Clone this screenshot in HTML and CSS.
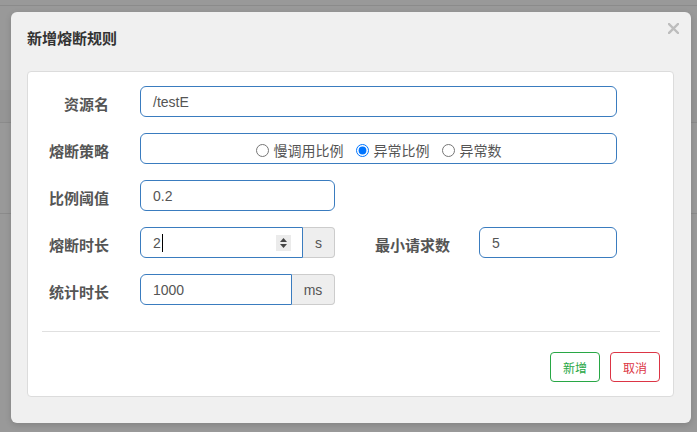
FILE: index.html
```html
<!DOCTYPE html>
<html lang="zh-CN">
<head>
<meta charset="utf-8">
<title>新增熔断规则</title>
<link rel="stylesheet" href="styles.css">
</head>
<body>
<div class="page">
  <div class="page-top"></div>
  <div class="page-band"></div>
  <div class="page-line"></div>
</div>
<div class="modal">
  <div class="modal-header">
    <h4 class="modal-title">新增熔断规则</h4>
    <button class="close" type="button" aria-label="关闭">
      <svg width="11" height="11" viewBox="0 0 11 11"><path d="M1 1L10 10M10 1L1 10" stroke="#bdbdbd" stroke-width="2.4" stroke-linecap="square" fill="none"/></svg>
    </button>
  </div>
  <div class="card">
    <div class="row">
      <div class="label">资源名</div>
      <div class="field w-full">/testE</div>
    </div>
    <div class="row">
      <div class="label">熔断策略</div>
      <div class="field w-full radios">
        <label class="radio"><input type="radio" name="grade">慢调用比例</label>
        <label class="radio"><input type="radio" name="grade" checked>异常比例</label>
        <label class="radio"><input type="radio" name="grade">异常数</label>
      </div>
    </div>
    <div class="row">
      <div class="label">比例阈值</div>
      <div class="field w-mid">0.2</div>
    </div>
    <div class="row">
      <div class="label">熔断时长</div>
      <div class="group">
        <div class="field group-input w-num">2<span class="caret"></span>
          <span class="spinner"><svg width="15" height="16" viewBox="0 0 15 16"><path d="M7.5 3L11 7H4Z" fill="#444"/><path d="M7.5 13L11 9H4Z" fill="#444"/></svg></span>
        </div>
        <div class="addon w-s">s</div>
      </div>
      <div class="label label-wide">最小请求数</div>
      <div class="field w-min">5</div>
    </div>
    <div class="row row-last">
      <div class="label">统计时长</div>
      <div class="group">
        <div class="field group-input w-stat">1000</div>
        <div class="addon w-ms">ms</div>
      </div>
    </div>
    <div class="divider"></div>
    <div class="footer">
      <button class="btn btn-ok" type="button">新增</button>
      <button class="btn btn-cancel" type="button">取消</button>
    </div>
  </div>
</div>
</body>
</html>
```
FILE: styles.css
```css
* { box-sizing: border-box; }
html, body { margin: 0; padding: 0; }
body {
  width: 697px;
  height: 432px;
  overflow: hidden;
  background: #999999;
  font-family: "Liberation Sans", "Noto Sans CJK SC", sans-serif;
  position: relative;
}
.page-top { height: 6px; border-bottom: 1px solid #8b8b8b; }
.page-band { margin-top: 84px; height: 33px; background: #959595; border-bottom: 1px solid #8b8b8b; }
.page-line { margin-top: 90px; height: 1px; background: #8b8b8b; }

.modal {
  position: absolute;
  left: 11px;
  top: 12px;
  width: 680px;
  height: 411px;
  background: #f0f0f0;
  border-radius: 6px;
  box-shadow: 0 2px 6px rgba(0,0,0,0.15);
}
.modal-header { height: 59px; padding: 17px 16px 0; position: relative; }
.modal-title { margin: 0; font-size: 15px; line-height: 20px; font-weight: bold; color: #333; }
.close {
  position: absolute;
  top: 11px;
  right: 12px;
  width: 11px;
  height: 11px;
  padding: 0;
  border: 0;
  background: none;
  display: block;
}
.close svg { display: block; }

.card {
  margin: 0 17px 0 16px;
  height: 326px;
  background: #fff;
  border: 1px solid #dcdcdc;
  border-radius: 4px;
  padding-top: 14px;
}
.row { display: flex; align-items: center; height: 31px; margin-bottom: 16px; }
.row-last { margin-bottom: 0; }
.label {
  width: 81px;
  margin-right: 31px;
  text-align: right;
  font-size: 15px;
  font-weight: bold;
  color: #555;
  padding-top: 4px;
  white-space: nowrap;
}
.label-wide { width: 115px; margin-right: 29px; }
.field {
  height: 31px;
  border: 1px solid #3a7cbf;
  border-radius: 6px;
  padding: 0 12px;
  display: flex;
  align-items: center;
  font-size: 14px;
  color: #555;
  background: #fff;
}
.w-full { width: 477px; }
.w-mid { width: 195px; }
.w-min { width: 138px; }
.w-num { width: 163px; padding-right: 11px; }
.w-stat { width: 152px; }
.w-s { width: 32px; }
.w-ms { width: 43px; }
.group { display: flex; }
.group-input { border-radius: 6px 0 0 6px; }
.addon {
  height: 31px;
  background: #eeeeee;
  border: 1px solid #cccccc;
  border-left: 0;
  border-radius: 0 4px 4px 0;
  display: flex;
  align-items: center;
  justify-content: center;
  font-size: 14px;
  color: #555;
}
.caret { width: 1px; height: 18px; background: #000; margin-left: 1px; }
.spinner { margin-left: auto; width: 15px; height: 16px; background: #ebebeb; display: block; }
.spinner svg { display: block; }

.radios { justify-content: center; padding-top: 3px; gap: 12px; }
.radio { display: flex; align-items: center; font-size: 14px; color: #555; }
.radio input { margin: 0 5px 0 0; width: 13px; height: 13px; }

.divider { margin: 26px 13px 0 14px; height: 1px; background: #e0e0e0; }
.footer { display: flex; justify-content: flex-end; gap: 10px; margin: 20px 13px 0 0; }
.btn {
  width: 50px;
  height: 30px;
  padding: 0;
  background: #fff;
  border-radius: 4px;
  font-family: "Liberation Sans", "Noto Sans CJK SC", sans-serif;
  font-size: 12px;
}
.btn-ok { border: 1px solid #28a745; color: #28a745; }
.btn-cancel { border: 1px solid #dc3545; color: #dc3545; }
```
